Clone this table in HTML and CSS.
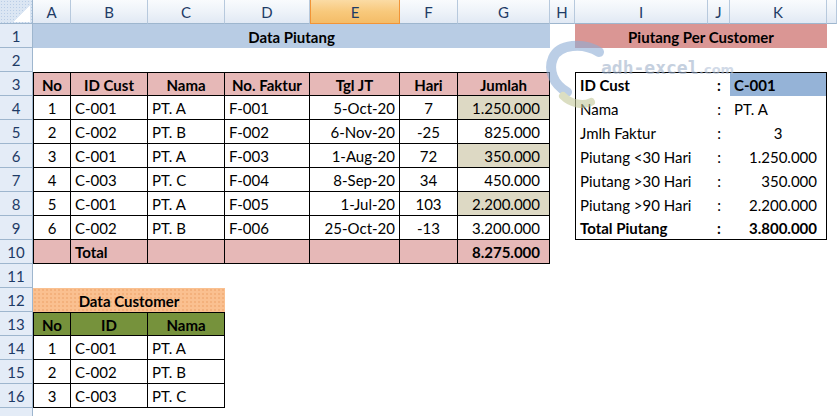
FILE: index.html
```html
<!DOCTYPE html>
<html>
<head>
<meta charset="utf-8">
<link rel="stylesheet" href="styles.css">
</head>
<body>
<div class="sheet">
  <div class="ch corner"></div>
  <div class="ch">A</div>
  <div class="ch">B</div>
  <div class="ch">C</div>
  <div class="ch">D</div>
  <div class="ch sel">E</div>
  <div class="ch">F</div>
  <div class="ch">G</div>
  <div class="ch">H</div>
  <div class="ch">I</div>
  <div class="ch">J</div>
  <div class="ch">K</div>
  <div class="ch"></div>

  <!-- row 1 -->
  <div class="rh">1</div>
  <div class="c m bold span7 blue">Data Piutang</div>
  <div class="c"></div>
  <div class="c m bold span3 red">Piutang Per Customer</div>
  <div class="c"></div>

  <!-- row 2 -->
  <div class="rh">2</div>
  <div class="c span12"></div>

  <!-- row 3 -->
  <div class="rh">3</div>
  <div class="c m bold pink b bt bl">No</div>
  <div class="c m bold pink b bt">ID Cust</div>
  <div class="c m bold pink b bt">Nama</div>
  <div class="c m bold pink b bt">No. Faktur</div>
  <div class="c m bold pink b bt">Tgl JT</div>
  <div class="c m bold pink b bt">Hari</div>
  <div class="c m bold pink b bt">Jumlah</div>
  <div class="c"></div>
  <div class="c l bold bt bl">ID Cust</div>
  <div class="c m bold bt">:</div>
  <div class="c l bold bt br idsel">C-001</div>
  <div class="c"></div>

  <!-- row 4 -->
  <div class="rh">4</div>
  <div class="c m b bl">1</div>
  <div class="c l b">C-001</div>
  <div class="c l b">PT. A</div>
  <div class="c l b">F-001</div>
  <div class="c r b">5-Oct-20</div>
  <div class="c m b">7</div>
  <div class="c r num b tan">1.250.000</div>
  <div class="c"></div>
  <div class="c l bl">Nama</div>
  <div class="c m">:</div>
  <div class="c l br">PT. A</div>
  <div class="c"></div>

  <!-- row 5 -->
  <div class="rh">5</div>
  <div class="c m b bl">2</div>
  <div class="c l b">C-002</div>
  <div class="c l b">PT. B</div>
  <div class="c l b">F-002</div>
  <div class="c r b">6-Nov-20</div>
  <div class="c m b">-25</div>
  <div class="c r num b">825.000</div>
  <div class="c"></div>
  <div class="c l bl">Jmlh Faktur</div>
  <div class="c m">:</div>
  <div class="c m br">3</div>
  <div class="c"></div>

  <!-- row 6 -->
  <div class="rh">6</div>
  <div class="c m b bl">3</div>
  <div class="c l b">C-001</div>
  <div class="c l b">PT. A</div>
  <div class="c l b">F-003</div>
  <div class="c r b">1-Aug-20</div>
  <div class="c m b">72</div>
  <div class="c r num b tan">350.000</div>
  <div class="c"></div>
  <div class="c l bl">Piutang &lt;30 Hari</div>
  <div class="c m">:</div>
  <div class="c r num br">1.250.000</div>
  <div class="c"></div>

  <!-- row 7 -->
  <div class="rh">7</div>
  <div class="c m b bl">4</div>
  <div class="c l b">C-003</div>
  <div class="c l b">PT. C</div>
  <div class="c l b">F-004</div>
  <div class="c r b">8-Sep-20</div>
  <div class="c m b">34</div>
  <div class="c r num b">450.000</div>
  <div class="c"></div>
  <div class="c l bl">Piutang &gt;30 Hari</div>
  <div class="c m">:</div>
  <div class="c r num br">350.000</div>
  <div class="c"></div>

  <!-- row 8 -->
  <div class="rh">8</div>
  <div class="c m b bl">5</div>
  <div class="c l b">C-001</div>
  <div class="c l b">PT. A</div>
  <div class="c l b">F-005</div>
  <div class="c r b">1-Jul-20</div>
  <div class="c m b">103</div>
  <div class="c r num b tan">2.200.000</div>
  <div class="c"></div>
  <div class="c l bl">Piutang &gt;90 Hari</div>
  <div class="c m">:</div>
  <div class="c r num br">2.200.000</div>
  <div class="c"></div>

  <!-- row 9 -->
  <div class="rh">9</div>
  <div class="c m b bl">6</div>
  <div class="c l b">C-002</div>
  <div class="c l b">PT. B</div>
  <div class="c l b">F-006</div>
  <div class="c r b">25-Oct-20</div>
  <div class="c m b">-13</div>
  <div class="c r num b">3.200.000</div>
  <div class="c"></div>
  <div class="c l bold bl bb">Total Piutang</div>
  <div class="c m bold bb">:</div>
  <div class="c r num bold br bb">3.800.000</div>
  <div class="c"></div>

  <!-- row 10 -->
  <div class="rh">10</div>
  <div class="c pink b bl"></div>
  <div class="c l bold pink b">Total</div>
  <div class="c pink b"></div>
  <div class="c pink b"></div>
  <div class="c pink b"></div>
  <div class="c pink b"></div>
  <div class="c r num bold pink b">8.275.000</div>
  <div class="c span5"></div>

  <!-- row 11 -->
  <div class="rh">11</div>
  <div class="c span12"></div>

  <!-- row 12 -->
  <div class="rh">12</div>
  <div class="c m bold span3 orange">Data Customer</div>
  <div class="c span9"></div>

  <!-- row 13 -->
  <div class="rh">13</div>
  <div class="c m bold green b bl bt">No</div>
  <div class="c m bold green b bt">ID</div>
  <div class="c m bold green b bt">Nama</div>
  <div class="c span9"></div>

  <!-- row 14 -->
  <div class="rh">14</div>
  <div class="c m b bl">1</div>
  <div class="c l b">C-001</div>
  <div class="c l b">PT. A</div>
  <div class="c span9"></div>

  <!-- row 15 -->
  <div class="rh">15</div>
  <div class="c m b bl">2</div>
  <div class="c l b">C-002</div>
  <div class="c l b">PT. B</div>
  <div class="c span9"></div>

  <!-- row 16 -->
  <div class="rh">16</div>
  <div class="c m b bl">3</div>
  <div class="c l b">C-003</div>
  <div class="c l b">PT. C</div>
  <div class="c span9"></div>

  <!-- row 17 (partially visible) -->
  <div class="rh"></div>
  <div class="c span12"></div>

  <svg class="watermark" width="200" height="80" viewBox="0 0 200 80">
    <path class="wm-swoosh" d="M56 12 C 40 2, 16 4, 10 18 C 5 30, 10 44, 24 52"/>
    <path class="wm-tail" d="M20 56 C 28 64, 40 66, 48 62"/>
    <text x="58" y="34" class="wm-main">adh-excel</text>
    <text x="156" y="34" class="wm-com">.com</text>
  </svg>
</div>
</body>
</html>
```

FILE: styles.css
```css
* { box-sizing: border-box; }

html, body {
  margin: 0;
  padding: 0;
  background: #ffffff;
  overflow: hidden;
}

body {
  font-family: "Lato", "Open Sans", sans-serif;
  font-size: 15px;
  color: #000;
}

.sheet {
  position: relative;
  display: grid;
  grid-template-columns: 33px 38px 77px 77px 85px 90px 58px 92px 25px 133px 22px 97px 1fr;
  grid-auto-rows: 24px;
  width: 837px;
  height: 416px;
  overflow: hidden;
  background: #ffffff;
}

.ch {
  display: flex;
  align-items: center;
  justify-content: center;
  background: linear-gradient(#f9fbfd 0%, #eef3f9 50%, #e1e9f4 100%);
  border-right: 1px solid #b7c9dd;
  border-bottom: 1px solid #9eb6ce;
  color: #1e3b66;
  font-size: 15px;
}

.ch.sel {
  background: linear-gradient(#fbdba4 0%, #f8c97c 50%, #f4bc67 100%);
  border-left: 1px solid #f29436;
  border-right: 1px solid #f29436;
  border-bottom: 1px solid #f29436;
}

.ch.corner {
  background:
    linear-gradient(135deg, transparent 55%, #ffffff 55%) no-repeat 10px 6px / 20px 16px,
    radial-gradient(circle, #b9cde6 0.8px, transparent 1px) 0 0 / 3px 3px,
    #dbe6f3;
  border-right: 1px solid #9eb6ce;
}

.rh {
  display: flex;
  align-items: center;
  justify-content: center;
  background: #e4ecf7;
  border-right: 1px solid #9eb6ce;
  border-bottom: 1px solid #9eb6ce;
  color: #1e3b66;
  font-size: 15px;
}

.c {
  display: flex;
  align-items: center;
  padding: 1px 4px 0 4px;
  white-space: nowrap;
  overflow: hidden;
}

.l { justify-content: flex-start; }
.r { justify-content: flex-end; }
.m { justify-content: center; }
.num { padding-right: 9px; }
.bold { font-weight: 700; }

.span3 { grid-column: span 3; }
.span5 { grid-column: span 5; }
.span7 { grid-column: span 7; }
.span9 { grid-column: span 9; }
.span12 { grid-column: span 12; }

.b { border-right: 1px solid #000; border-bottom: 1px solid #000; }
.bl { border-left: 1px solid #000; }
.bt { border-top: 1px solid #000; }
.br { border-right: 1px solid #000; }
.bb { border-bottom: 1px solid #000; }

.blue { background: #b8cce4; }
.red { background: #da9694; }
.pink { background: #e6b8b7; }
.tan { background: #ddd9c4; }
.idsel { background: #95b3d7; }
.green { background: #76923c; }
.orange {
  background:
    radial-gradient(circle, #f3b07c 0.7px, transparent 1px) 0 0 / 4px 4px,
    #fac090;
}

.watermark {
  position: absolute;
  left: 543px;
  top: 40px;
  width: 200px;
  height: 80px;
  opacity: 0.6;
  pointer-events: none;
}

.wm-swoosh {
  fill: none;
  stroke: #8eaed6;
  stroke-width: 10px;
  stroke-linecap: round;
}

.wm-tail {
  fill: none;
  stroke: #c4c99a;
  stroke-width: 8px;
  stroke-linecap: round;
}

.wm-main {
  font-family: "DejaVu Sans Mono", monospace;
  font-weight: 700;
  font-size: 18px;
  fill: #9fb1ca;
}

.wm-com {
  font-family: "DejaVu Sans", sans-serif;
  font-weight: 700;
  font-size: 13px;
  fill: #b3c2d8;
}
```
